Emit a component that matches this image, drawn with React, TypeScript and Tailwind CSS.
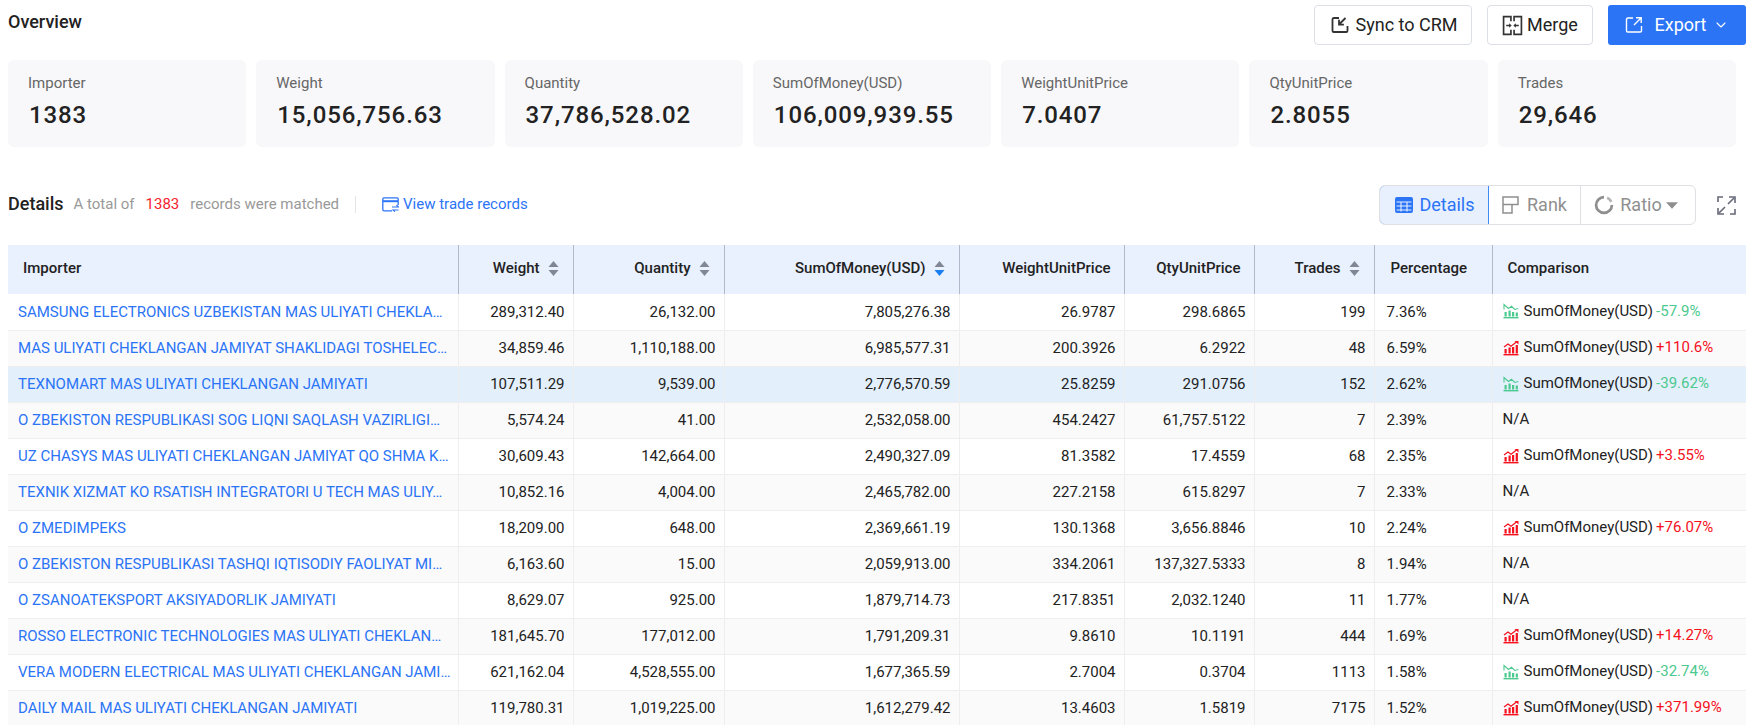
import { ChevronDown } from "lucide-react";

interface Row {
  name: string;
  weight: string;
  quantity: string;
  sum: string;
  wup: string;
  qup: string;
  trades: string;
  pct: string;
  change?: string;
}

const cards = [
  { label: "Importer", value: "1383" },
  { label: "Weight", value: "15,056,756.63" },
  { label: "Quantity", value: "37,786,528.02" },
  { label: "SumOfMoney(USD)", value: "106,009,939.55" },
  { label: "WeightUnitPrice", value: "7.0407" },
  { label: "QtyUnitPrice", value: "2.8055" },
  { label: "Trades", value: "29,646" },
];

const rows: Row[] = [
  { name: "SAMSUNG ELECTRONICS UZBEKISTAN MAS ULIYATI CHEKLA…", weight: "289,312.40", quantity: "26,132.00", sum: "7,805,276.38", wup: "26.9787", qup: "298.6865", trades: "199", pct: "7.36%", change: "-57.9%" },
  { name: "MAS ULIYATI CHEKLANGAN JAMIYAT SHAKLIDAGI TOSHELEC…", weight: "34,859.46", quantity: "1,110,188.00", sum: "6,985,577.31", wup: "200.3926", qup: "6.2922", trades: "48", pct: "6.59%", change: "+110.6%" },
  { name: "TEXNOMART MAS ULIYATI CHEKLANGAN JAMIYATI", weight: "107,511.29", quantity: "9,539.00", sum: "2,776,570.59", wup: "25.8259", qup: "291.0756", trades: "152", pct: "2.62%", change: "-39.62%" },
  { name: "O ZBEKISTON RESPUBLIKASI SOG LIQNI SAQLASH VAZIRLIGI…", weight: "5,574.24", quantity: "41.00", sum: "2,532,058.00", wup: "454.2427", qup: "61,757.5122", trades: "7", pct: "2.39%" },
  { name: "UZ CHASYS MAS ULIYATI CHEKLANGAN JAMIYAT QO SHMA K…", weight: "30,609.43", quantity: "142,664.00", sum: "2,490,327.09", wup: "81.3582", qup: "17.4559", trades: "68", pct: "2.35%", change: "+3.55%" },
  { name: "TEXNIK XIZMAT KO RSATISH INTEGRATORI U TECH MAS ULIY…", weight: "10,852.16", quantity: "4,004.00", sum: "2,465,782.00", wup: "227.2158", qup: "615.8297", trades: "7", pct: "2.33%" },
  { name: "O ZMEDIMPEKS", weight: "18,209.00", quantity: "648.00", sum: "2,369,661.19", wup: "130.1368", qup: "3,656.8846", trades: "10", pct: "2.24%", change: "+76.07%" },
  { name: "O ZBEKISTON RESPUBLIKASI TASHQI IQTISODIY FAOLIYAT MI…", weight: "6,163.60", quantity: "15.00", sum: "2,059,913.00", wup: "334.2061", qup: "137,327.5333", trades: "8", pct: "1.94%" },
  { name: "O ZSANOATEKSPORT AKSIYADORLIK JAMIYATI", weight: "8,629.07", quantity: "925.00", sum: "1,879,714.73", wup: "217.8351", qup: "2,032.1240", trades: "11", pct: "1.77%" },
  { name: "ROSSO ELECTRONIC TECHNOLOGIES MAS ULIYATI CHEKLAN…", weight: "181,645.70", quantity: "177,012.00", sum: "1,791,209.31", wup: "9.8610", qup: "10.1191", trades: "444", pct: "1.69%", change: "+14.27%" },
  { name: "VERA MODERN ELECTRICAL MAS ULIYATI CHEKLANGAN JAMI…", weight: "621,162.04", quantity: "4,528,555.00", sum: "1,677,365.59", wup: "2.7004", qup: "0.3704", trades: "1113", pct: "1.58%", change: "-32.74%" },
  { name: "DAILY MAIL MAS ULIYATI CHEKLANGAN JAMIYATI", weight: "119,780.31", quantity: "1,019,225.00", sum: "1,612,279.42", wup: "13.4603", qup: "1.5819", trades: "7175", pct: "1.52%", change: "+371.99%" },
];

function SortIcon({ active }: { active?: boolean }) {
  return (
    <svg width="11" height="17" viewBox="0 0 11 17" className="ml-2 shrink-0">
      <path d="M5.5 1l5 6H.5z" fill="#808694" />
      <path d="M5.5 16l-5-6h10z" fill={active ? "#1a7ef0" : "#808694"} />
    </svg>
  );
}

function TrendIcon({ up }: { up: boolean }) {
  const color = up ? "#f5111d" : "#4cc98f";
  return (
    <svg width="16" height="16" viewBox="0 0 16 16" className="shrink-0" fill="none">
      <rect x="0.5" y="14" width="15" height="1.4" fill={color} />
      <rect x="1.5" y="9" width="2.2" height="4.5" fill={color} />
      <rect x="5.5" y="7.5" width="2.2" height="6" fill={color} />
      <rect x="9" y={up ? 7 : 9} width="2.2" height={up ? 6.5 : 4.5} fill={color} />
      <rect x="12.7" y={up ? 5 : 9.5} width="2.2" height={up ? 8.5 : 4} fill={color} />
      {up ? (
        <>
          <path d="M1 7l4-3 3 2.2L13.5 2" stroke={color} strokeWidth="1.2" />
          <path d="M11.5 1h4v3.6z" fill={color} />
        </>
      ) : (
        <path d="M1 6.5V1.5l4.5 4 3-2.2 3.2 3.2 3.6-1" stroke={color} strokeWidth="1.1" />
      )}
    </svg>
  );
}

function Num({ children }: { children: string }) {
  return <td className="border-r border-b border-[#eeeeee] pl-2 pr-[8px] text-right">{children}</td>;
}

function Th({ children, sort, active }: { children: string; sort?: boolean; active?: boolean }) {
  return (
    <th className={sort ? "border-r border-[#b4b8cb] pr-[14px] pb-[2px] text-right font-medium" : "border-r border-[#b4b8cb] pr-[13px] pb-[2px] text-right font-medium"}>
      <div className="flex items-center justify-end">
        {children}
        {sort && <SortIcon active={active} />}
      </div>
    </th>
  );
}

export default function App() {
  return (
    <div className="h-[725px] w-[1755px] overflow-hidden bg-white text-[#222222] [font-family:Roboto,sans-serif]">
      <div className="pl-2 pr-[9px]">
        {/* Overview */}
        <div className="flex items-start justify-between pt-[5px]">
          <h2 className="mt-[5px] text-lg font-medium leading-6 text-[#222222]">Overview</h2>
          <div className="flex gap-[15px]">
            <button className="flex h-10 w-[158px] items-center justify-center gap-[7px] rounded border border-[#dcdfe6] pl-[2px] text-lg">
              <svg width="18" height="18" viewBox="0 0 18 18" fill="none" stroke="#333" strokeWidth="1.8">
                <path d="M8 2H2.8A1.3 1.3 0 0 0 1.5 3.3v11.4A1.3 1.3 0 0 0 2.8 16h12.4a1.3 1.3 0 0 0 1.3-1.3V10" />
                <path d="M14.5 2L8 8.5M8 3.8v4.9h4.9" />
              </svg>
              Sync to CRM
            </button>
            <button className="flex h-10 w-[106px] items-center justify-center gap-[4px] rounded border border-[#dcdfe6] text-lg">
              <svg width="21" height="21" viewBox="0 0 20 20" fill="none" stroke="#333" strokeWidth="1.6">
                <path d="M8.5 6V1.5H1.5v17h7V14M11.5 6V1.5h7v17h-7V14" />
                <path d="M4 10h4M16 10h-4" strokeWidth="1.4" />
                <path d="M6.8 7.8L9.2 10l-2.4 2.2zM13.2 7.8L10.8 10l2.4 2.2z" fill="#333" stroke="none" />
              </svg>
              Merge
            </button>
            <button className="flex h-10 w-[138px] items-center justify-center rounded-[3px] bg-[#2b74f6] text-lg text-white">
              <svg width="18" height="18" viewBox="0 0 18 18" fill="none" stroke="#fff" strokeWidth="1.4" className="mr-3">
                <path d="M8 2H2.8A1.3 1.3 0 0 0 1.5 3.3v11.4A1.3 1.3 0 0 0 2.8 16h12.4a1.3 1.3 0 0 0 1.3-1.3V10" />
                <path d="M9 9l7-7M11 1.8h5.2V7" />
              </svg>
              Export
              <ChevronDown size={16} className="ml-[7px]" strokeWidth={1.6} />
            </button>
          </div>
        </div>

        <div className="mt-[15px] flex w-[1728px] gap-[10px]">
          {cards.map((c) => (
            <div key={c.label} className="h-[87px] flex-1 rounded-md bg-[#f8f8fa] pl-5 pt-[14px]">
              <div className="text-[15px] leading-[18px] text-[#666666]">{c.label}</div>
              <div className="mt-[7px] pl-px text-2xl font-medium leading-8 tracking-[0.9px] text-[#222222]">{c.value}</div>
            </div>
          ))}
        </div>

        {/* Details */}
        <div className="mt-[38px] flex h-10 items-center">
          <div className="flex items-center pb-[2px]">
            <h3 className="text-lg font-medium">Details</h3>
            <span className="ml-[10px] text-[15px] text-[#999999]">A total of</span>
            <span className="ml-[11px] text-[15px] text-[#f5222d]">1383</span>
            <span className="ml-[11px] text-[15px] text-[#999999]">records were matched</span>
            <span className="ml-4 h-[17px] w-px bg-[#e4e4e8]" />
            <svg width="17" height="15" viewBox="0 0 17 15" fill="none" stroke="#2b74f6" strokeWidth="1.3" className="ml-[26px]">
              <path d="M10 13.8H2a1.2 1.2 0 0 1-1.2-1.2V2A1.2 1.2 0 0 1 2 .8h13A1.2 1.2 0 0 1 16.2 2v6" />
              <path d="M1 4.2h15" strokeWidth="2" />
              <path d="M10 10h6.5l-2-2M16.5 13H11l2 1.6" strokeWidth="1.1" />
            </svg>
            <a className="ml-1 text-[15px] text-[#2b74f6]">View trade records</a>
          </div>

          <div className="ml-auto mr-[21px] flex h-10 w-[317px] overflow-hidden rounded-md border border-[#e0e0e4] text-lg text-[#8f8f8f]">
            <div className="-my-px -ml-px flex w-[110px] items-center justify-center gap-[6px] rounded-l-md border border-[#3d8bf2] bg-[#e8f0fe] pl-[2px] text-[#2b74f6]">
              <svg width="18" height="16" viewBox="0 0 18 16" fill="none">
                <rect x="0" y="0" width="18" height="16" rx="2" fill="#2b74f6" />
                <path d="M1.5 5h15M1.5 9h15M1.5 13h15M6 5v9.5M12 5v9.5" stroke="#e8f0fe" strokeWidth="1.1" />
              </svg>
              Details
            </div>
            <div className="flex w-[92px] items-center justify-center gap-2 border-r border-[#e0e0e4]">
              <svg width="17" height="18" viewBox="0 0 17 18" fill="none" stroke="#8f8f8f" strokeWidth="1.5">
                <path d="M1 1h15v7.5H1zM1 8.5h9V17H1z" />
              </svg>
              Rank
            </div>
            <div className="flex flex-1 items-center justify-center gap-[6px] pr-1">
              <svg width="20" height="20" viewBox="0 0 19 19" fill="none" stroke="#8f8f8f" strokeWidth="2.6">
                <path d="M17 9.5A7.5 7.5 0 1 1 9.5 2" />
                <path d="M12.5 2.6A7.5 7.5 0 0 1 16.4 6.5" stroke="#b5b5b5" />
              </svg>
              Ratio
              <svg width="12" height="7" viewBox="0 0 11 6" className="-ml-[2px]">
                <path d="M0 0h11L5.5 6z" fill="#8f8f8f" />
              </svg>
            </div>
          </div>
          <svg width="19" height="19" viewBox="0 0 19 19" fill="none" stroke="#666a78" strokeWidth="1.6" className="mr-[10px]">
            <path d="M1 6V1h5M18 13v5h-5" />
            <path d="M12 1h6v6M1 12v6h6" />
            <path d="M17 2l-6 6M2 17l6-6" />
          </svg>
        </div>

        {/* Table */}
        <table className="mt-5 w-[1738px] table-fixed border-collapse text-[15px]">
          <colgroup>
            <col className="w-[450px]" />
            <col className="w-[115px]" />
            <col className="w-[151px]" />
            <col className="w-[235px]" />
            <col className="w-[165px]" />
            <col className="w-[130px]" />
            <col className="w-[120px]" />
            <col className="w-[118px]" />
            <col className="w-[254px]" />
          </colgroup>
          <thead>
            <tr className="h-[49px] bg-[#e9f0fe]">
              <th className="border-r border-[#b4b8cb] pl-[15px] pb-[2px] text-left font-medium">Importer</th>
              <Th sort>Weight</Th>
              <Th sort>Quantity</Th>
              <Th sort active>SumOfMoney(USD)</Th>
              <Th>WeightUnitPrice</Th>
              <Th>QtyUnitPrice</Th>
              <Th sort>Trades</Th>
              <th className="border-r border-[#b4b8cb] pl-4 pb-[2px] text-left font-medium">Percentage</th>
              <th className="pl-[15px] pb-[2px] text-left font-medium">Comparison</th>
            </tr>
          </thead>
          <tbody>
            {rows.map((r, i) => (
              <tr
                key={r.name}
                className={i === 2 ? "h-9 bg-[#e3f0fc]" : i % 2 === 1 ? "h-9 bg-[#fafafa]" : "h-9 bg-white"}
              >
                <td className="border-r border-b border-[#eeeeee] pl-[10px] pr-[5px]">
                  <div className="whitespace-nowrap text-[#2b74f6]">{r.name}</div>
                </td>
                <Num>{r.weight}</Num>
                <Num>{r.quantity}</Num>
                <Num>{r.sum}</Num>
                <Num>{r.wup}</Num>
                <Num>{r.qup}</Num>
                <Num>{r.trades}</Num>
                <td className="border-r border-b border-[#eeeeee] pl-3">{r.pct}</td>
                <td className="border-b border-[#eeeeee] pb-px pl-[10px]">
                  {r.change ? (
                    <div className="flex items-center">
                      <TrendIcon up={r.change.startsWith("+")} />
                      <span className="ml-[5px]">SumOfMoney(USD)</span>
                      <span className={r.change.startsWith("+") ? "ml-[3px] text-[#f5111d]" : "ml-[3px] text-[#4cc98f]"}>
                        {r.change}
                      </span>
                    </div>
                  ) : (
                    "N/A"
                  )}
                </td>
              </tr>
            ))}
          </tbody>
        </table>
      </div>
    </div>
  );
}
